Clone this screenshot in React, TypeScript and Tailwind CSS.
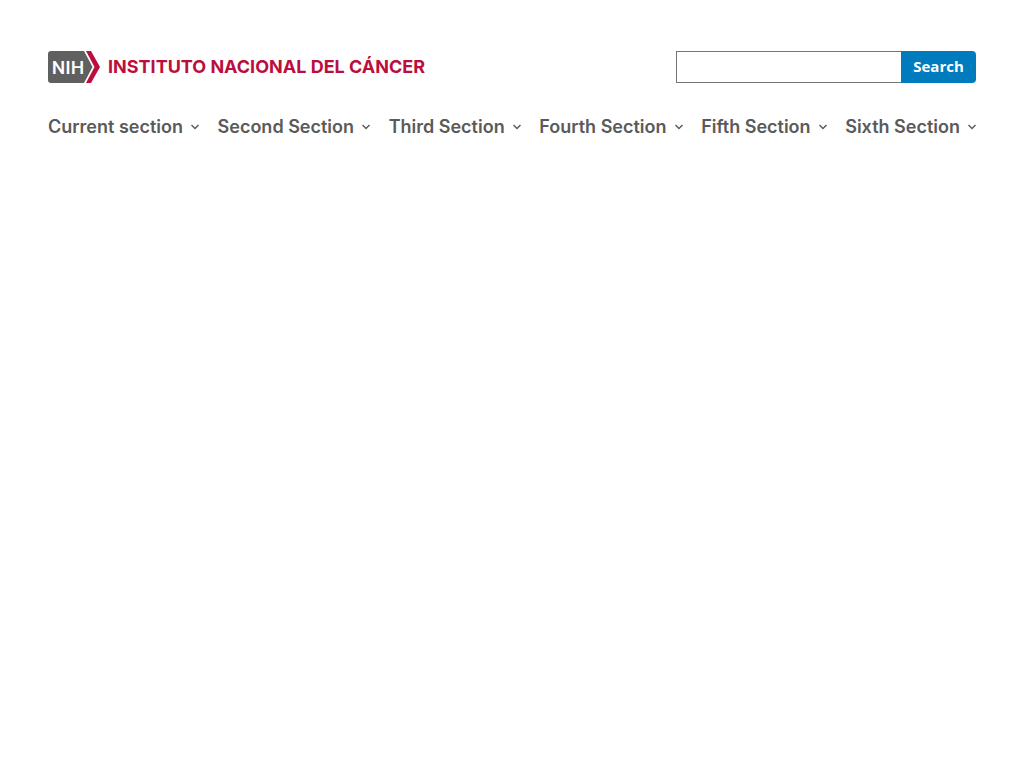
const sections = [
  "Current section",
  "Second Section",
  "Third Section",
  "Fourth Section",
  "Fifth Section",
  "Sixth Section",
];

function Logo() {
  return (
    <a
      href="#"
      aria-label="NIH Instituto Nacional del Cáncer"
      className="flex h-8 items-center gap-2 whitespace-nowrap text-[#bb0e3d]"
    >
      <svg viewBox="0 0 52 32" className="h-8 w-[52px] shrink-0">
        <path d="M3 0H36L44.5 16L36 32H3Q0 32 0 29V3Q0 0 3 0Z" fill="#606060" />
        <path d="M38 0H43L52 16L43 32H38L46.5 16Z" fill="#bb0e3d" />
        <text
          x="20"
          y="23"
          textAnchor="middle"
          fill="#fff"
          className="font-['Roboto',sans-serif] text-[19px] font-medium"
        >
          NIH
        </text>
      </svg>
      <span className="font-['Inter',sans-serif] text-[18px] leading-8 font-bold">
        INSTITUTO NACIONAL DEL CÁNCER
      </span>
    </a>
  );
}

function Search() {
  return (
    <form role="search" className="flex h-8 w-[300px]" onSubmit={(e) => e.preventDefault()}>
      <input
        type="search"
        aria-label="Search"
        className="min-w-0 flex-1 appearance-none border border-r-0 border-[#71767a] bg-white px-2 font-['Open_Sans',sans-serif] text-base outline-none"
      />
      <button
        type="submit"
        className="w-[75px] rounded-r bg-[#007bbd] pb-0.5 font-['Open_Sans',sans-serif] text-[15px] leading-none font-bold text-white"
      >
        Search
      </button>
    </form>
  );
}

function Chevron() {
  return (
    <svg viewBox="0 0 8 6" className="h-1.5 w-2 shrink-0" aria-hidden="true">
      <path d="M0.5 1L4 4.6L7.5 1" fill="none" stroke="#5a5a5a" strokeWidth="1.4" />
    </svg>
  );
}

export default function App() {
  return (
    <header className="bg-white px-12 pt-[51px]">
      <div className="flex items-center justify-between">
        <Logo />
        <Search />
      </div>
      <nav aria-label="Primary" className="mt-8">
        <ul className="flex items-center justify-between">
          {sections.map((name) => (
            <li key={name}>
              <button
                type="button"
                aria-expanded="false"
                className="flex items-center gap-2 font-['Inter',sans-serif] text-[18px] leading-6 font-semibold whitespace-nowrap text-[#5a5a5a]"
              >
                {name}
                <Chevron />
              </button>
            </li>
          ))}
        </ul>
      </nav>
    </header>
  );
}
